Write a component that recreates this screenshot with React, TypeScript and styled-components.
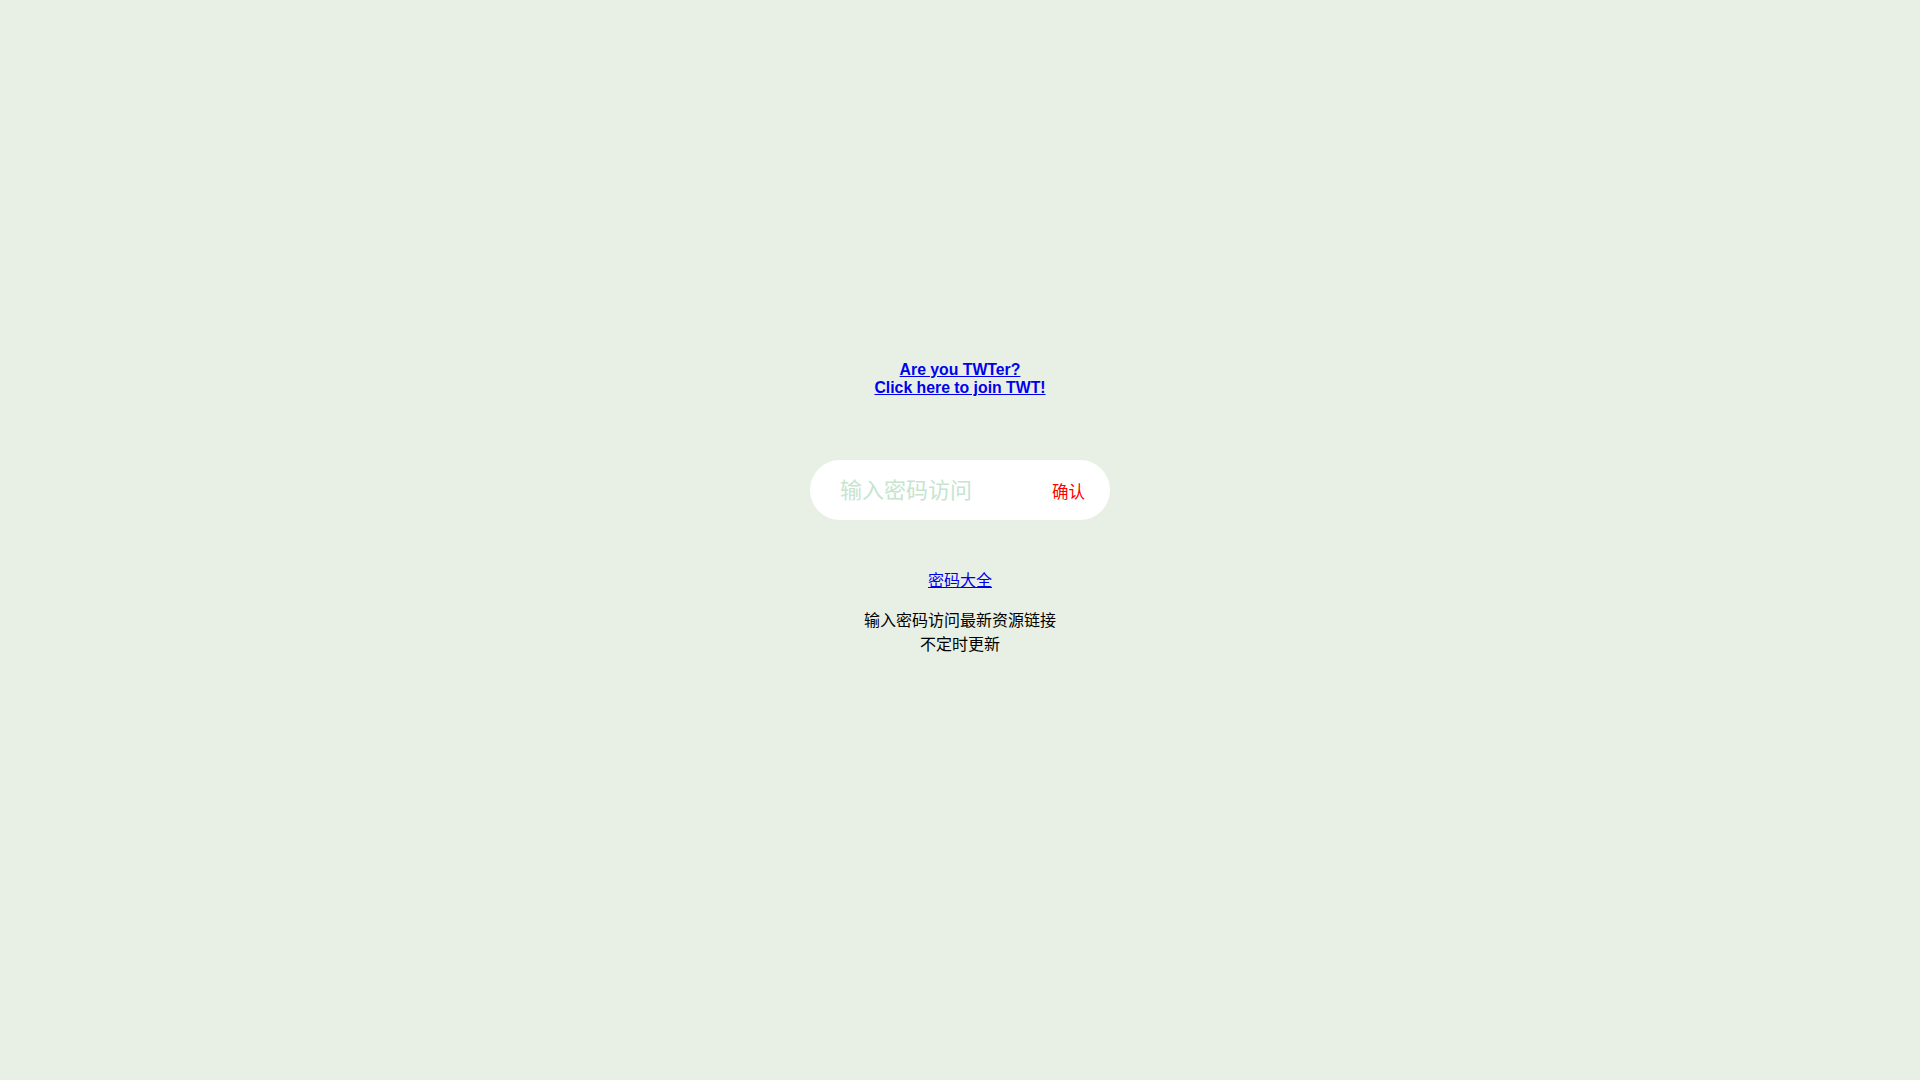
import * as React from 'react';
import styled, { createGlobalStyle } from 'styled-components';

const GlobalStyle = createGlobalStyle`
  html, body {
    margin: 0;
    padding: 0;
    background: #e8f0e5;
    font-family: "Liberation Sans", Arial, "Noto Sans CJK SC", sans-serif;
  }
`;

const Page = styled.div`
  min-height: 100vh;
  display: flex;
  flex-direction: column;
  align-items: center;
  padding-top: 361px;
  box-sizing: border-box;
`;

const JoinLink = styled.a`
  display: block;
  font-size: 15.8px;
  font-weight: bold;
  line-height: 18px;
  color: #0000ee;
  text-align: center;
  text-decoration: underline;
`;

const SearchPill = styled.form`
  margin-top: 63px;
  width: 300px;
  height: 60px;
  border-radius: 30px;
  background: #fff;
  display: flex;
  align-items: center;
  padding: 0 25px 0 30px;
  box-sizing: border-box;
`;

const PassInput = styled.input`
  flex: 1;
  min-width: 0;
  border: none;
  outline: none;
  background: transparent;
  font-size: 22px;
  font-family: "Noto Sans CJK SC", sans-serif;
  color: #333;
  padding: 0;
  margin-top: -5px;
  &::placeholder {
    color: #c6e4cf;
  }
`;

const ConfirmButton = styled.button`
  border: none;
  background: transparent;
  color: #ff0000;
  font-size: 16.5px;
  font-family: "Noto Sans CJK SC", sans-serif;
  padding: 0;
  margin-top: 2px;
  cursor: pointer;
`;

const AllLink = styled.a`
  margin-top: 50px;
  font-size: 16px;
  line-height: 18px;
  font-family: "Noto Sans CJK SC", sans-serif;
  color: #0000ee;
  text-decoration: underline;
`;

const Note = styled.p`
  margin: 19px 0 0;
  font-size: 16px;
  line-height: 24px;
  font-family: "Noto Sans CJK SC", sans-serif;
  color: #000;
  text-align: center;
`;

export default function App() {
  const [pass, setPass] = React.useState('');
  return (
    <>
      <GlobalStyle />
      <Page>
        <JoinLink href="#">
          Are you TWTer?
          <br />
          Click here to join TWT!
        </JoinLink>
        <SearchPill onSubmit={(e) => e.preventDefault()}>
          <PassInput
            value={pass}
            onChange={(e) => setPass(e.target.value)}
            placeholder="输入密码访问"
          />
          <ConfirmButton type="submit">确认</ConfirmButton>
        </SearchPill>
        <AllLink href="#">密码大全</AllLink>
        <Note>
          输入密码访问最新资源链接
          <br />
          不定时更新
        </Note>
      </Page>
    </>
  );
}
